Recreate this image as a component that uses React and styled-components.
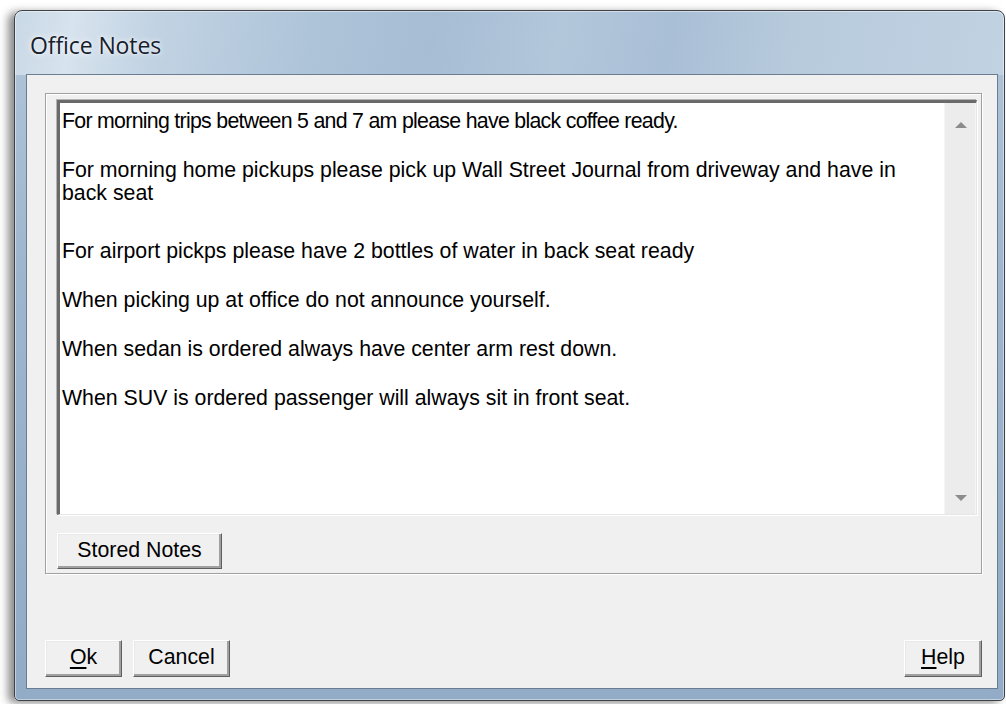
import React from "react";
import styled, { createGlobalStyle } from "styled-components";

const GlobalStyle = createGlobalStyle`
  html, body {
    margin: 0;
    padding: 0;
    background: #ffffff;
  }
  * {
    box-sizing: border-box;
  }
`;

const Screen = styled.div`
  width: 1006px;
  height: 704px;
  padding: 10px 1px 3px 14px;
  display: flex;
  font-family: "Liberation Sans", Arial, sans-serif;
`;

const Window = styled.div`
  flex: 1;
  display: flex;
  flex-direction: column;
  border: 1px solid #3e4247;
  border-radius: 8px 8px 5px 5px;
  padding: 0 6px 11px 11px;
  box-shadow: -6px 2px 9px rgba(0, 0, 0, 0.45), inset 0 0 0 1px rgba(255, 255, 255, 0.45);
  background: linear-gradient(
        100deg,
        #c9d8e6 0%,
        #d7e3ee 6%,
        #c2d3e3 14%,
        #aec4d9 30%,
        #a6bdd4 42%,
        #b3c7db 55%,
        #a9bfd6 66%,
        #b7cadc 78%,
        #c1d2e2 100%
      )
      top / 100% 64px no-repeat,
    linear-gradient(180deg, #b2c6da 0%, #9db5cd 40%, #92abc6 100%);
`;

const TitleBar = styled.div`
  height: 63px;
  display: flex;
  align-items: center;
  padding: 4px 0 0 4px;
`;

const Title = styled.span`
  font-family: "Open Sans", "Noto Sans", sans-serif;
  font-size: 23px;
  letter-spacing: -0.1px;
  color: #16202c;
  text-shadow: 0 0 6px rgba(255, 255, 255, 0.9), 0 0 2px rgba(255, 255, 255, 0.9);
`;

const Client = styled.div`
  flex: 1;
  display: flex;
  flex-direction: column;
  background: #f0f0f0;
  border: 1px solid #6b7d90;
  padding: 18px 15px 11px 18px;
`;

const GroupBox = styled.div`
  height: 481px;
  display: flex;
  flex-direction: column;
  align-items: flex-start;
  border: 1px solid #a0a0a0;
  box-shadow: inset 1px 1px 0 #ffffff, 1px 1px 0 #ffffff;
  padding: 6px 4px 4px 11px;
`;

const NotesBox = styled.div`
  align-self: stretch;
  height: 415px;
  display: flex;
  background: #ffffff;
  border-style: solid;
  border-width: 3px 1px 1px 3px;
  border-color: #6a6a6a #e6e6e6 #e6e6e6 #6a6a6a;
  box-shadow: -1px -1px 0 #b4b4b4, 1px 1px 0 #ffffff;
`;

const NotesText = styled.div`
  flex: 1;
  padding: 7px 10px 0 2px;
  font-size: 21.3px;
  line-height: 23px;
  color: #000000;
`;

const Note = styled.p`
  margin: 0 0 ${(p) => p.$space || 26}px;
  letter-spacing: ${(p) => p.$tracking || 0}px;
`;

const ScrollBar = styled.div`
  width: 32px;
  display: flex;
  flex-direction: column;
  justify-content: space-between;
  align-items: center;
  background: #ececec;
  border-left: 1px solid #f6f6f6;
  box-shadow: inset -1px 0 0 #f6f6f6;
  padding: 19px 0 13px;
`;

const Arrow = styled.span`
  width: 0;
  height: 0;
  border-left: 6px solid transparent;
  border-right: 6px solid transparent;
  ${(p) =>
    p.$down
      ? "border-top: 6px solid #8c8c8c;"
      : "border-bottom: 6px solid #8c8c8c;"}
`;

const Button = styled.button`
  width: ${(p) => p.$w}px;
  height: ${(p) => p.$h || 37}px;
  margin: ${(p) => p.$margin || 0};
  padding: 0 0 2px;
  background: #f0f0f0;
  border: 1px solid;
  border-color: #ffffff #5f5f5f #5f5f5f #ffffff;
  box-shadow: inset -2px -2px 0 #a0a0a0, inset 1px 1px 0 #e8e8e8;
  font-family: "Liberation Sans", Arial, sans-serif;
  font-size: 21.3px;
  color: #000000;
  cursor: pointer;

  u {
    text-underline-offset: 3px;
  }
`;

const Footer = styled.div`
  margin-top: auto;
  display: flex;
  align-items: flex-end;
  gap: 11px;
`;

const Spacer = styled.div`
  flex: 1;
`;

const notes = [
  {
    text: "For morning trips between 5 and 7 am please have black coffee ready.",
    tracking: -0.7,
  },
  {
    text: "For morning home pickups please pick up Wall Street Journal from driveway and have in back seat",
    space: 35,
  },
  { text: "For airport pickps please have 2 bottles of water in back seat ready" },
  { text: "When picking up at office do not announce yourself." },
  { text: "When sedan is ordered always have center arm rest down." },
  { text: "When SUV is ordered passenger will always sit in front seat." },
];

export default function App() {
  return (
    <Screen>
      <GlobalStyle />
      <Window>
        <TitleBar>
          <Title>Office Notes</Title>
        </TitleBar>
        <Client>
          <GroupBox>
            <NotesBox>
              <NotesText>
                {notes.map((n) => (
                  <Note key={n.text} $space={n.space} $tracking={n.tracking}>
                    {n.text}
                  </Note>
                ))}
              </NotesText>
              <ScrollBar>
                <Arrow />
                <Arrow $down />
              </ScrollBar>
            </NotesBox>
            <Button $w={165} $h={36} $margin="18px 0 0">
              Stored Notes
            </Button>
          </GroupBox>
          <Footer>
            <Button $w={77}>
              <u>O</u>k
            </Button>
            <Button $w={97}>Cancel</Button>
            <Spacer />
            <Button $w={78}>
              <u>H</u>elp
            </Button>
          </Footer>
        </Client>
      </Window>
    </Screen>
  );
}
